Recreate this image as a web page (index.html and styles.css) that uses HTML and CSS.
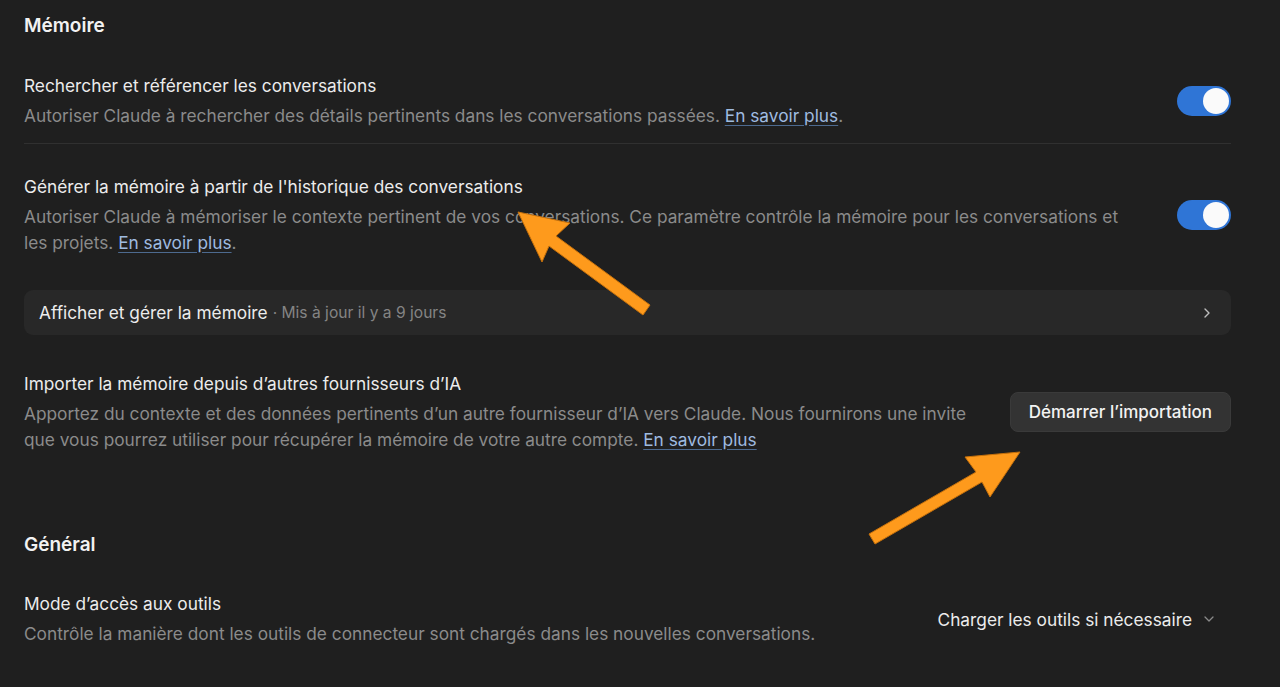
FILE: index.html
```html
<!DOCTYPE html>
<html lang="fr">
<head>
<meta charset="utf-8">
<link rel="stylesheet" href="styles.css">
</head>
<body>
<main class="page">
  <section class="section">
    <h2 class="section-title">Mémoire</h2>

    <div class="row row-first row-toggle">
      <div class="row-text">
        <div class="row-title">Rechercher et référencer les conversations</div>
        <div class="row-desc">Autoriser Claude à rechercher des détails pertinents dans les conversations passées. <a class="link" href="#">En savoir plus</a>.</div>
      </div>
      <div class="toggle"><span class="knob"></span></div>
    </div>

    <div class="divider"></div>

    <div class="row row-toggle">
      <div class="row-text">
        <div class="row-title">Générer la mémoire à partir de l'historique des conversations</div>
        <div class="row-desc">Autoriser Claude à mémoriser le contexte pertinent de vos conversations. Ce paramètre contrôle la mémoire pour les conversations et les projets. <a class="link" href="#">En savoir plus</a>.</div>
      </div>
      <div class="toggle"><span class="knob"></span></div>
    </div>

    <div class="memory-box">
      <span class="memory-label">Afficher et gérer la mémoire</span>
      <span class="memory-meta">· Mis à jour il y a 9 jours</span>
      <svg class="chev-right" width="12" height="12" viewBox="0 0 12 12"><path d="M4 2 L8 6 L4 10" fill="none" stroke="#bdbdbd" stroke-width="1.4" stroke-linecap="round" stroke-linejoin="round"/></svg>
    </div>

    <div class="row row-import">
      <div class="row-text">
        <div class="row-title">Importer la mémoire depuis d’autres fournisseurs d’IA</div>
        <div class="row-desc">Apportez du contexte et des données pertinents d’un autre fournisseur d’IA vers Claude. Nous fournirons une invite que vous pourrez utiliser pour récupérer la mémoire de votre autre compte. <a class="link" href="#">En savoir plus</a></div>
      </div>
      <button class="btn">Démarrer l’importation</button>
    </div>
  </section>

  <section class="section section-general">
    <h2 class="section-title">Général</h2>
    <div class="row row-tools">
      <div class="row-text">
        <div class="row-title">Mode d’accès aux outils</div>
        <div class="row-desc">Contrôle la manière dont les outils de connecteur sont chargés dans les nouvelles conversations.</div>
      </div>
      <div class="select">
        <span>Charger les outils si nécessaire</span>
        <svg width="14" height="14" viewBox="0 0 14 14"><path d="M3 5 L7 9 L11 5" fill="none" stroke="#8a8a8a" stroke-width="1.3" stroke-linecap="round" stroke-linejoin="round"/></svg>
      </div>
    </div>
  </section>

  <svg class="arrows" width="1280" height="687" viewBox="0 0 1280 687">
    <g fill="#fe9a1c" stroke="#c4700c" stroke-width="1" stroke-linejoin="round">
      <polygon points="518,212 570,223 556,236 650,305 643,315 549,246 542,262"/>
      <polygon points="1020,452 990,497 982,482 875,544 869,534 976,472 965,457"/>
    </g>
  </svg>
</main>
</body>
</html>
```

FILE: styles.css
```css
* { box-sizing: border-box; }
html, body {
  margin: 0;
  padding: 0;
  background: #1f1f1f;
}
body {
  font-family: Inter, "Noto Sans", "Liberation Sans", sans-serif;
  color: #ececec;
  -webkit-font-smoothing: antialiased;
}
.page {
  position: relative;
  width: 1280px;
  height: 687px;
  overflow: hidden;
  padding: 13px 49px 0 24px;
}
.section-title {
  margin: 0;
  font-size: 19px;
  line-height: 26px;
  font-weight: 600;
  color: #f2f2f2;
}
.row {
  display: flex;
  align-items: center;
  justify-content: space-between;
  gap: 32px;
}
.row-toggle { gap: 50px; }
.row-first { margin-top: 34px; }
.row-text { flex: 1; min-width: 0; }
.row-title {
  font-size: 17.3px;
  line-height: 26px;
  color: #ececec;
}
.row-desc {
  font-size: 17.3px;
  line-height: 26px;
  color: #8b8b8b;
  margin-top: 4px;
}
.link {
  color: #9fbbe0;
  text-decoration: underline;
  text-decoration-color: #4d6a8f;
  text-underline-offset: 3px;
}
.toggle {
  flex: none;
  width: 54px;
  height: 30px;
  border-radius: 15px;
  background: #2f75d6;
  display: flex;
  align-items: center;
  justify-content: flex-end;
  padding: 2px;
}
.knob {
  width: 26px;
  height: 26px;
  border-radius: 50%;
  background: #fafafa;
}
.divider {
  height: 1px;
  background: #303030;
  margin: 14px 0 30px;
}
.memory-box {
  margin-top: 34px;
  height: 45px;
  background: #282828;
  border-radius: 9px;
  display: flex;
  align-items: center;
  padding: 0 18px 0 15px;
  gap: 5px;
}
.memory-label {
  font-size: 17.3px;
  color: #ececec;
}
.memory-meta {
  font-size: 15.6px;
  color: #848484;
  flex: 1;
}
.chev-right { flex: none; }
.row-import { margin-top: 36px; }
.btn {
  flex: none;
  font-family: inherit;
  font-size: 17px;
  font-weight: 500;
  color: #f2f2f2;
  background: #333333;
  border: 1px solid #3a3a3a;
  border-radius: 8px;
  height: 40px;
  padding: 0 18px;
}
.section-general { margin-top: 79px; }
.row-tools { margin-top: 33px; }
.select {
  display: flex;
  align-items: center;
  gap: 10px;
  font-size: 17.3px;
  color: #ececec;
  padding-right: 15px;
}
.arrows {
  position: absolute;
  left: 0;
  top: 0;
  pointer-events: none;
}
```
